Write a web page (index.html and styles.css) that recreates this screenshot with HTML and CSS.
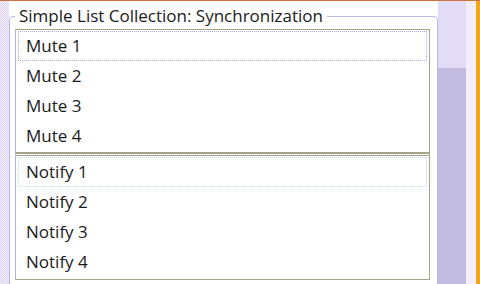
FILE: index.html
```html
<!DOCTYPE html>
<html lang="en">
<head>
    <meta charset="UTF-8">
    <title>Simple List Collection: Synchronization</title>
    <link rel="stylesheet" href="styles.css">
</head>
<body>
    <div class="window">
        <div class="edge-left"></div>
        <fieldset class="group">
            <legend>Simple List Collection: Synchronization</legend>
            <ul class="list">
                <li class="item focused">Mute 1</li>
                <li class="item">Mute 2</li>
                <li class="item">Mute 3</li>
                <li class="item">Mute 4</li>
            </ul>
            <ul class="list list-second">
                <li class="item focused cyan">Notify 1</li>
                <li class="item">Notify 2</li>
                <li class="item">Notify 3</li>
                <li class="item">Notify 4</li>
            </ul>
        </fieldset>
        <div class="scroll">
            <div class="scroll-top"></div>
            <div class="scroll-track"></div>
        </div>
        <div class="edge-right"></div>
        <div class="edge-orange"></div>
    </div>
</body>
</html>
```

FILE: styles.css
```css
/* base */
* {
    margin: 0;
    padding: 0;
    box-sizing: border-box;
}

body {
    width: 480px;
    height: 284px;
    overflow: hidden;
    background: #ffffff;
    font-family: 'Open Sans', sans-serif;
    color: #1a1a1a;
}

/* window frame */
.window {
    display: flex;
    height: 284px;
    border-top: 1px solid #c8743c;
}

.edge-left {
    width: 9px;
    background: repeating-conic-gradient(#dcd4f6 0 25%, #f8eefc 0 50%) 0 0 / 2px 2px;
}

.edge-right {
    width: 10px;
    background: #f4eefc;
}

.edge-orange {
    width: 4px;
    background: #f4a818;
}

.scroll {
    width: 28px;
    display: flex;
    flex-direction: column;
}

.scroll-top {
    height: 67px;
    background: #e2dcf6;
}

.scroll-track {
    flex: 1;
    background: #c2bce2;
}

/* group box */
.group {
    width: 429px;
    height: 300px;
    margin-top: 5px;
    border: 1px solid #b8b8e6;
    border-radius: 4px;
    padding: 3px 7px 0 5px;
}

.group legend {
    margin-left: 0;
    padding: 0 4px 0 4px;
    font-size: 17px;
    line-height: 20px;
}

/* lists */
.list {
    list-style: none;
    border: 1px solid #a8a48a;
    border-left-color: #b4b4d8;
    padding: 1px 2px 1px 2px;
}

.list-second {
    border-top: 3px double #a8a48a;
    padding-top: 1px;
    height: 127px;
}

.item {
    height: 30px;
    line-height: 28px;
    padding-left: 7px;
    font-size: 17px;
    border: 1px solid transparent;
}

.item.focused {
    border: 1px dotted #a8a8f0;
}

.item.cyan {
    border-color: #b8e4f0;
}
```
